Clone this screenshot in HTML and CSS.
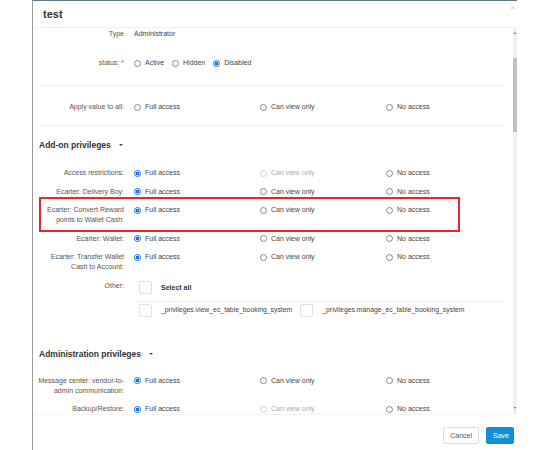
FILE: index.html
```html
<!DOCTYPE html>
<html>
<head>
<meta charset="utf-8">
<link rel="stylesheet" href="styles.css">
</head>
<body>
<div class="modal">
  <div class="header">
    <div class="title">test</div>
    <div class="close">×</div>
  </div>
  <div class="body">
    <div class="content">
      <div class="row r-type">
        <div class="label"><span>Type</span></div>
        <div class="value">Administrator</div>
      </div>
      <div class="row r-status">
        <div class="label"><span>status: <span class="req">*</span></span></div>
        <div class="value inline">
          <span class="opt"><span class="radio"></span>Active</span>
          <span class="opt"><span class="radio"></span>Hidden</span>
          <span class="opt"><span class="radio on"></span>Disabled</span>
        </div>
      </div>
      <div class="sep s1"></div>
      <div class="row r-apply">
        <div class="label"><span>Apply value to all:</span></div>
        <div class="value cols">
          <span class="opt"><span class="radio"></span>Full access</span>
          <span class="opt"><span class="radio"></span>Can view only</span>
          <span class="opt"><span class="radio"></span>No access</span>
        </div>
      </div>
      <div class="sep s2"></div>

      <div class="heading h1">Add-on privileges <span class="caret"></span></div>

      <div class="row priv first">
        <div class="label"><span>Access restrictions:</span></div>
        <div class="value cols">
          <span class="opt"><span class="radio on"></span>Full access</span>
          <span class="opt dis"><span class="radio"></span>Can view only</span>
          <span class="opt"><span class="radio"></span>No access</span>
        </div>
      </div>
      <div class="row priv">
        <div class="label"><span>Ecarter: Delivery Boy:</span></div>
        <div class="value cols">
          <span class="opt"><span class="radio on"></span>Full access</span>
          <span class="opt"><span class="radio"></span>Can view only</span>
          <span class="opt"><span class="radio"></span>No access</span>
        </div>
      </div>
      <div class="row priv">
        <div class="label"><span>Ecarter: Convert Reward<br>points to Wallet Cash:</span></div>
        <div class="value cols">
          <span class="opt"><span class="radio on"></span>Full access</span>
          <span class="opt"><span class="radio"></span>Can view only</span>
          <span class="opt"><span class="radio"></span>No access</span>
        </div>
      </div>
      <div class="row priv">
        <div class="label"><span>Ecarter: Wallet:</span></div>
        <div class="value cols">
          <span class="opt"><span class="radio on"></span>Full access</span>
          <span class="opt"><span class="radio"></span>Can view only</span>
          <span class="opt"><span class="radio"></span>No access</span>
        </div>
      </div>
      <div class="row priv">
        <div class="label"><span>Ecarter: Transfer Wallet<br>Cash to Account:</span></div>
        <div class="value cols">
          <span class="opt"><span class="radio on"></span>Full access</span>
          <span class="opt"><span class="radio"></span>Can view only</span>
          <span class="opt"><span class="radio"></span>No access</span>
        </div>
      </div>
      <div class="row priv other">
        <div class="label"><span>Other:</span></div>
        <div class="value checks">
          <div class="check-item"><span class="box"></span><b>Select all</b></div>
          <div class="check-sep"></div>
          <div class="check-row">
            <div class="check-item"><span class="box"></span>_privileges.view_ec_table_booking_system</div>
            <div class="check-item"><span class="box"></span>_privileges.manage_ec_table_booking_system</div>
          </div>
        </div>
      </div>

      <div class="heading h2">Administration privileges <span class="caret"></span></div>

      <div class="row priv first2">
        <div class="label"><span>Message center: vendor-to-<br>admin communication:</span></div>
        <div class="value cols">
          <span class="opt"><span class="radio on"></span>Full access</span>
          <span class="opt"><span class="radio"></span>Can view only</span>
          <span class="opt"><span class="radio"></span>No access</span>
        </div>
      </div>
      <div class="row priv">
        <div class="label"><span>Backup/Restore:</span></div>
        <div class="value cols">
          <span class="opt"><span class="radio on"></span>Full access</span>
          <span class="opt dis"><span class="radio"></span>Can view only</span>
          <span class="opt"><span class="radio"></span>No access</span>
        </div>
      </div>
    </div>
    <div class="scrollbar">
      <div class="arrow up"></div>
      <div class="thumb"></div>
      <div class="arrow down"></div>
    </div>
  </div>
  <div class="footer">
    <button class="btn cancel">Cancel</button>
    <button class="btn save">Save</button>
  </div>
</div>
<div class="highlight"></div>
</body>
</html>
```
FILE: styles.css
```css
html, body {
  margin: 0;
  padding: 0;
  background: #fff;
}
body {
  font-family: "Liberation Sans", Arial, sans-serif;
  font-size: 7px;
  color: #444;
  position: relative;
  width: 550px;
  height: 450px;
  overflow: hidden;
}
.modal {
  margin-left: 32px;
  width: 485px;
  height: 450px;
  box-sizing: border-box;
  border-left: 1px solid #9a9a9a;
  border-top: 1px solid #5f7b89;
  display: flex;
  flex-direction: column;
}
.header {
  height: 26px;
  flex: none;
  display: flex;
  justify-content: space-between;
  align-items: center;
  padding: 0 2px 0 10px;
  border-bottom: 1px solid #f0f0f0;
}
.title {
  font-size: 11px;
  font-weight: bold;
  color: #333;
}
.close {
  align-self: flex-start;
  margin-top: 2px;
  font-size: 8px;
  color: #c4c4c4;
  line-height: 10px;
}
.body {
  height: 387px;
  flex: none;
  display: flex;
  border-bottom: 1px solid #f3f3f3;
  box-sizing: border-box;
}
.content {
  flex: 1;
  overflow: hidden;
  padding: 1px 7px 0 6px;
}
.scrollbar {
  width: 4px;
  flex: none;
  background: #f1f1f1;
  display: flex;
  flex-direction: column;
  align-items: center;
}
.arrow {
  width: 0;
  height: 0;
  border-left: 1.5px solid transparent;
  border-right: 1.5px solid transparent;
}
.arrow.up {
  margin-top: 4px;
  border-bottom: 2px solid #555;
}
.arrow.down {
  margin-top: auto;
  margin-bottom: 5px;
  border-top: 2px solid #555;
}
.thumb {
  width: 4px;
  height: 74px;
  margin-top: 24px;
  background: #c1c1c1;
}
.row {
  display: grid;
  grid-template-columns: 85px 1fr;
  column-gap: 10px;
  line-height: 10px;
  align-items: start;
}
.label {
  display: flex;
  justify-content: flex-end;
  text-align: right;
  white-space: nowrap;
  color: #555;
}
.req {
  color: #e53935;
}
.value {
  color: #444;
}
.inline {
  display: flex;
}
.inline .opt {
  margin-right: 8px;
}
.cols {
  display: grid;
  grid-template-columns: 126px 126px 1fr;
  align-items: start;
}
.opt {
  display: inline-flex;
  align-items: center;
  gap: 4px;
  height: 10px;
}
.opt.dis {
  color: #aaa;
}
.radio {
  width: 7px;
  height: 7px;
  box-sizing: border-box;
  border: 1px solid #888;
  border-radius: 50%;
  flex: none;
  background: #fff;
}
.radio.on {
  border-color: #1a73e8;
  background: radial-gradient(circle, #1a73e8 0 1.7px, #fff 2.1px);
}
.opt.dis .radio {
  border-color: #cfcfcf;
}
.r-status { margin-top: 19px; }
.sep {
  height: 1px;
  background: #f0f0f0;
}
.s1 { margin-top: 17px; }
.r-apply { margin-top: 16px; }
.s2 { margin-top: 13px; }
.heading {
  font-size: 8.5px;
  font-weight: bold;
  color: #333;
  line-height: 12px;
  display: flex;
  align-items: center;
}
.h1 { margin-top: 13px; }
.h2 { margin-top: 31px; }
.caret {
  width: 0;
  height: 0;
  margin-left: 8px;
  border-left: 2.5px solid transparent;
  border-right: 2.5px solid transparent;
  border-top: 2.5px solid #444;
}
.priv { margin-top: 8.5px; }
.priv.first { margin-top: 17px; }
.priv.first2 { margin-top: 16px; }
.checks {
  padding-left: 5px;
}
.check-item {
  display: flex;
  align-items: center;
  gap: 9px;
  height: 13px;
  font-size: 6.85px;
}
.check-item b {
  color: #333;
  margin-top: 1px;
  font-size: 7px;
}
.box {
  width: 13px;
  height: 13px;
  box-sizing: border-box;
  border: 1px solid #e0e0e0;
  border-radius: 2px;
  background: #fff;
  flex: none;
}
.check-sep {
  height: 1px;
  background: #f0f0f0;
  margin: 7px 0 2px -4px;
}
.check-row {
  display: flex;
  gap: 8px;
}
.footer {
  flex: 1;
  display: flex;
  justify-content: flex-end;
  align-items: flex-start;
  gap: 7px;
  padding: 12px 3px 0 0;
}
.btn {
  font-family: "Liberation Sans", Arial, sans-serif;
  font-size: 7px;
  height: 17px;
  padding: 0 6px;
  border-radius: 2px;
  margin: 0;
  cursor: pointer;
}
.cancel {
  background: #fff;
  border: 1px solid #dcdcdc;
  color: #555;
}
.save {
  background: #128fd7;
  border: 1px solid #128fd7;
  color: #fff;
  width: 28px;
}
.highlight {
  position: absolute;
  left: 39px;
  top: 197px;
  width: 421px;
  height: 35px;
  box-sizing: border-box;
  border: 2px solid #e8262b;
}
```
